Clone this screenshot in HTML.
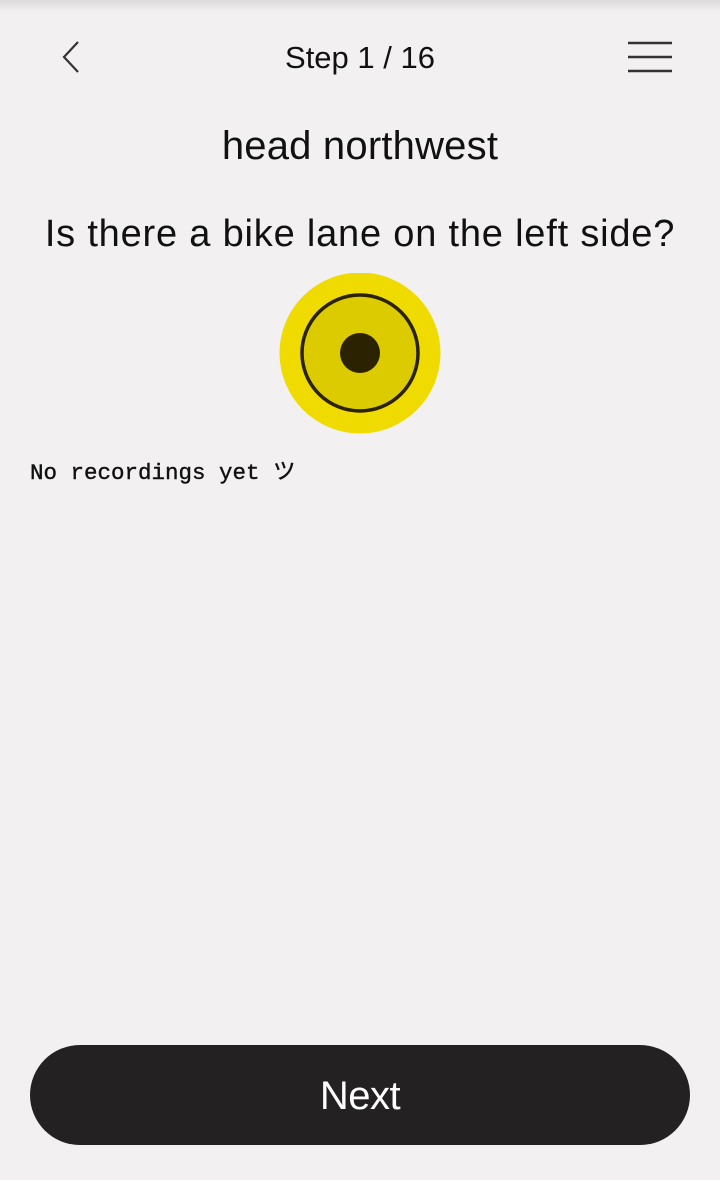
<!DOCTYPE html>
<html><head><meta charset="utf-8"><style>
html,body{margin:0;padding:0;}
body{width:720px;height:1180px;background:#f2f0f1;position:relative;overflow:hidden;font-family:"Liberation Sans",sans-serif;color:#111;}
.shadow{position:absolute;top:0;left:0;width:720px;height:12px;background:linear-gradient(#dcdadb,#f2f0f1);}
.t{position:absolute;left:0;width:720px;text-align:center;white-space:nowrap;}
.btn{position:absolute;left:30px;top:1045px;width:660px;height:100px;border-radius:50px;background:#242122;color:#fff;font-size:40px;line-height:102px;text-align:center;letter-spacing:-0.5px;}
.mono{position:absolute;left:30px;top:454px;font-family:"Liberation Mono","Noto Sans CJK JP",monospace;font-size:22.5px;color:#111;-webkit-text-stroke:0.4px #111;}
</style></head><body>
<div class="shadow"></div>
<svg style="position:absolute;left:58px;top:40px" width="24" height="34"><path d="M20 2 L6 17 L20 32" fill="none" stroke="#333" stroke-width="2.2"/></svg>
<div class="t" style="top:40px;font-size:31px;letter-spacing:0px;">Step 1 / 16</div>
<svg style="position:absolute;left:626px;top:40px" width="48" height="34"><g stroke="#333" stroke-width="2.4"><line x1="2" y1="3" x2="46" y2="3"/><line x1="2" y1="17" x2="46" y2="17"/><line x1="2" y1="31" x2="46" y2="31"/></g></svg>
<div class="t" style="top:124px;font-size:40px;letter-spacing:0.2px;">head northwest</div>
<div class="t" style="top:213px;font-size:38px;letter-spacing:0.8px;">Is there a bike lane on the left side?</div>
<svg style="position:absolute;left:279px;top:273px" width="162" height="162"><circle cx="81" cy="80" r="80.5" fill="#efdb00"/><circle cx="81" cy="80" r="58" fill="#dbcb00" stroke="#2a2200" stroke-width="3.5"/><circle cx="81" cy="80" r="20" fill="#2a2200"/></svg>
<div class="mono">No recordings yet ツ</div>
<div class="btn">Next</div>
</body></html>
